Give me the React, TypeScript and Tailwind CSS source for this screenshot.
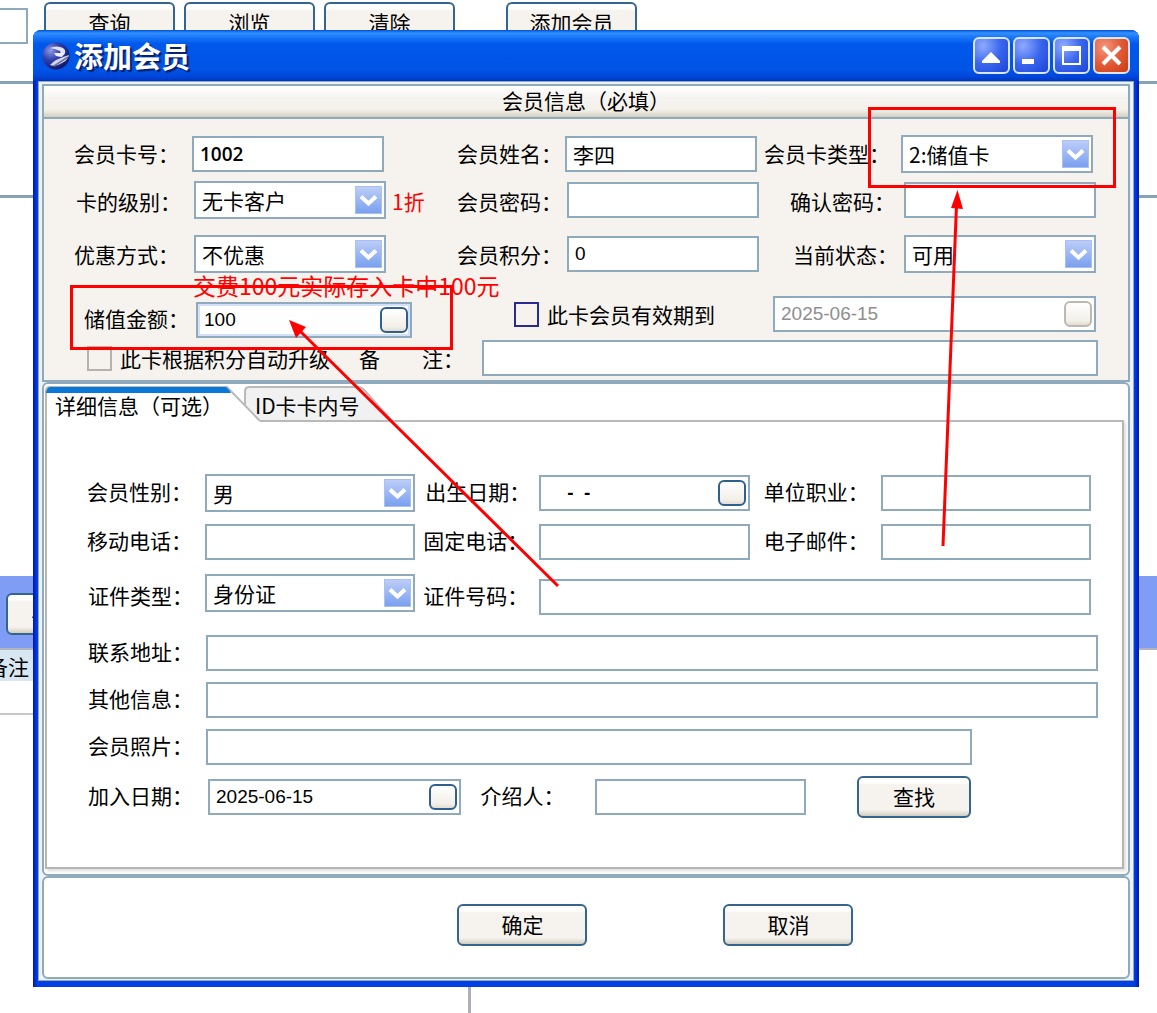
import { useState } from "react";
import type { ReactNode } from "react";

const cjk = "font-['Noto_Sans_CJK_SC',sans-serif]";
const latin = "font-['Liberation_Sans','Noto_Sans_CJK_SC',sans-serif]";

interface IField {
  id: string;
  className?: string;
  textClass?: string;
  value?: string;
  disabled?: boolean;
}

function Label({
  htmlFor,
  className = "",
  children,
}: {
  htmlFor: string;
  className?: string;
  children: ReactNode;
}) {
  return (
    <label htmlFor={htmlFor} className={`whitespace-nowrap ${className}`}>
      {children}
    </label>
  );
}

function TextField({ id, className = "", textClass = latin, value = "" }: IField) {
  return (
    <input
      id={id}
      type="text"
      defaultValue={value}
      className={`h-9 w-full min-w-0 border-2 border-[#8faabc] bg-white px-1.5 text-[19px] outline-none ${textClass} ${className}`}
    />
  );
}

function SelectField({
  id,
  className = "",
  options,
}: {
  id: string;
  className?: string;
  options: string[];
}) {
  return (
    <div className={`relative h-[38px] min-w-0 ${className}`}>
      <select
        id={id}
        className="h-full w-full appearance-none border-2 border-[#8faabc] bg-white pr-8 pl-1.5 text-[21px] leading-8 outline-none"
      >
        {options.map((option) => (
          <option key={option}>{option}</option>
        ))}
      </select>
      <span className="pointer-events-none absolute top-[5px] right-1 flex h-7 w-[27px] items-center justify-center border border-[#a9c0f4] bg-linear-to-b from-[#bccdf8] to-[#7aa0ee]">
        <svg width="19" height="13" viewBox="0 0 19 13" fill="none">
          <path d="M2 2.5 L9.5 9.5 L17 2.5" stroke="#fff" strokeWidth="4" />
        </svg>
      </span>
    </div>
  );
}

function DateField({
  id,
  className = "",
  textClass = "",
  value = "",
  disabled = false,
}: IField) {
  return (
    <div
      className={`flex h-9 min-w-0 items-center border-2 border-[#8faabc] bg-white pr-0.5 ${className}`}
    >
      <input
        id={id}
        type="text"
        defaultValue={value}
        disabled={disabled}
        className={`h-8 w-full min-w-0 px-1.5 text-[19px] whitespace-pre outline-none disabled:text-[#8e8e8e] ${latin} ${textClass}`}
      />
      <button
        type="button"
        aria-label="选择"
        disabled={disabled}
        className="h-[26px] w-7 shrink-0 rounded-md border-2 border-[#2f5f8f] bg-[linear-gradient(to_bottom,#ffffff,#f7f5f1_50%,#f3f0ea_80%,#e3ddd3)] disabled:border-[#bdb8b0]"
      />
    </div>
  );
}

function PushButton({
  className = "",
  children,
}: {
  className?: string;
  children: ReactNode;
}) {
  return (
    <button
      type="button"
      className={`h-[42px] shrink-0 rounded-md border-2 border-[#33658f] bg-[linear-gradient(to_bottom,#ffffff_12%,#f6f3ee_18%,#f6f3ee_84%,#d3ccc0)] pb-0.5 text-[21px] ${className}`}
    >
      {children}
    </button>
  );
}

function Caption({
  label,
  close = false,
  children,
}: {
  label: string;
  close?: boolean;
  children: ReactNode;
}) {
  return (
    <button
      type="button"
      aria-label={label}
      className={`h-[37px] w-[37px] rounded-md border-2 border-[#dbe6fb] ${
        close
          ? "bg-radial-[at_30%_25%] from-[#f3967c] via-[#e25a37] to-[#c93a10]"
          : "bg-radial-[at_25%_20%] from-[#8fabff] via-[#3a66ee] to-[#1a45d8]"
      }`}
    >
      <svg width="33" height="33" viewBox="0 0 33 33" fill="none">
        {children}
      </svg>
    </button>
  );
}

// main window that stays visible around the dialog
function Backdrop() {
  return (
    <div className="absolute inset-0 flex flex-col overflow-hidden">
      <div className="flex h-[81px] shrink-0 items-start pt-0.5">
        <input
          type="text"
          aria-label="关键字"
          className="mt-1.5 mr-4 h-9 w-7 border-2 border-l-0 border-[#8faabc]"
        />
        <PushButton className="mr-[9px] w-[131px]">查询</PushButton>
        <PushButton className="mr-[9px] w-[131px]">浏览</PushButton>
        <PushButton className="mr-[51px] w-[131px]">清除</PushButton>
        <PushButton className="w-[131px]">添加会员</PushButton>
      </div>
      <div className="h-[3px] shrink-0 bg-[#88a3b5]" />
      <div className="h-[111px] shrink-0" />
      <div className="h-[3px] shrink-0 bg-[#88a3b5]" />
      <div className="h-[378px] shrink-0" />
      <div className="flex h-[74px] shrink-0 items-center border-b-2 border-[#b3b3bf] bg-[#809df5] pt-1 pl-1.5">
        <PushButton className="w-[92px]">导出</PushButton>
      </div>
      <div className="flex h-[31px] w-[33px] shrink-0 items-center justify-end bg-[#d8e6f2] pr-1">
        <span className="whitespace-nowrap">备注</span>
      </div>
      <div className="h-[34px] w-[33px] shrink-0 border-b-2 border-[#c8c8c8]" />
      <div className="ml-[468px] w-[3px] grow bg-[#aeaeb6]" />
    </div>
  );
}

function TitleBar() {
  return (
    <header className="flex h-[51px] items-center rounded-t-lg bg-[linear-gradient(to_bottom,#0050d8_0,#3290ff_3px,#1a78fa_7px,#0058ea_14px,#0054e6_40px,#0046d8_47px,#0034c4_51px)] px-[9px]">
      <svg width="28" height="28" viewBox="0 0 28 28">
        <defs>
          <radialGradient id="ball" cx="0.3" cy="0.3" r="0.75">
            <stop offset="0" stopColor="#8f9ce6" />
            <stop offset="0.45" stopColor="#3442b0" />
            <stop offset="1" stopColor="#0f1868" />
          </radialGradient>
        </defs>
        <circle cx="14" cy="14" r="13.5" fill="url(#ball)" />
        <path
          d="M8 6 Q15 3 21 6 Q25 9 22 13 Q18 15 15 14 Q20 12 18 9 Q14 7 8 6Z"
          fill="#dfe3f8"
        />
        <path d="M12 11 L22 11 L20 15 L14 14 Z" fill="#eef0fb" />
        <path d="M8 23 Q13 17 27 13 Q26 18 20 21 Q14 25 8 23Z" fill="#d3d6e6" />
        <path d="M12 24 L26 15" stroke="#6a74ac" strokeWidth="1.5" />
      </svg>
      <h1 className="ml-1 grow text-[29px] leading-none font-bold whitespace-nowrap text-white [text-shadow:2px_2px_1px_#0a1f6b]">
        添加会员
      </h1>
      <div className="flex gap-[3px]">
        <Caption label="收起">
          <path d="M7 24 V22 L16 13 L25 22 V24 Z" fill="#fff" />
        </Caption>
        <Caption label="最小化">
          <rect x="7" y="20" width="12" height="5" fill="#fff" />
        </Caption>
        <Caption label="最大化">
          <rect x="8" y="9" width="17" height="16" stroke="#fff" strokeWidth="2" />
          <rect x="7" y="7" width="19" height="5" fill="#fff" />
        </Caption>
        <Caption label="关闭" close>
          <path d="M8 8 L25 25 M25 8 L8 25" stroke="#fff" strokeWidth="4" />
        </Caption>
      </div>
    </header>
  );
}

const requiredRow =
  "grid grid-cols-[150px_1fr_181px_1fr_145px_1fr_32px] items-center";

function RequiredPanel() {
  return (
    <section className="border-2 border-[#8faabc] bg-[#f6f3ee]">
      <h2 className="h-[33px] border-b-2 border-[#8faabc] bg-[linear-gradient(to_bottom,#ffffff,#f6f4f1_12px,#f4f1ea_24px,#d3cebf_31px)] text-center leading-7">
        会员信息（必填）
      </h2>
      <div className="pt-4 pb-1">
        <div className="grid grid-cols-[148px_1fr_181px_1fr_144px_1fr_35px] items-center [&_label]:pb-0.5">
          <Label htmlFor="cardNo" className="pl-[30px]">会员卡号：</Label>
          <TextField
            id="cardNo"
            value="1002"
            textClass="font-['Open_Sans',sans-serif] font-semibold"
          />
          <Label htmlFor="name" className="pl-[73px]">会员姓名：</Label>
          <TextField id="name" value="李四" textClass={`${cjk} text-[21px]`} />
          <Label htmlFor="cardType" className="pl-[7px]">会员卡类型：</Label>
          <SelectField id="cardType" options={["2:储值卡"]} />
        </div>
        <div className={`mt-2 [&_label]:pt-0.5 ${requiredRow}`}>
          <Label htmlFor="level" className="pl-8">卡的级别：</Label>
          <SelectField id="level" options={["无卡客户"]} />
          <div className="flex">
            <span className="w-[71px] pt-0.5 pl-1.5 text-[#ff0000]">1折</span>
            <Label htmlFor="password">会员密码：</Label>
          </div>
          <TextField id="password" />
          <Label htmlFor="password2" className="pl-[31px]">确认密码：</Label>
          <TextField id="password2" />
        </div>
        <div className={`mt-4 ${requiredRow}`}>
          <Label htmlFor="discount" className="pl-[30px]">优惠方式：</Label>
          <SelectField id="discount" options={["不优惠"]} />
          <Label htmlFor="points" className="pl-[71px]">会员积分：</Label>
          <TextField id="points" value="0" />
          <Label htmlFor="status" className="pl-[34px]">当前状态：</Label>
          <SelectField id="status" options={["可用"]} />
        </div>
        <p className="h-[23px] pl-[149px] text-[23px] leading-6 text-[#ff0000]">
          交费100元实际存入卡中100元
        </p>
        <div className="flex h-[42px]">
          <Label htmlFor="amount" className="w-[152px] self-end pb-0.5 pl-10 leading-9">
            储值金额：
          </Label>
          <DateField
            id="amount"
            value="100"
            className="w-[216px] self-end shadow-[inset_0_0_0_2px_#d3e0f8]"
            textClass="bg-transparent"
          />
          <label className="ml-[102px] flex h-9 items-center gap-2 whitespace-nowrap">
            <input
              type="checkbox"
              className="h-[25px] w-[25px] appearance-none border-2 border-[#2a2a94]"
            />
            此卡会员有效期到
          </label>
          <DateField
            id="expire"
            value="2025-06-15"
            disabled
            className="mr-8 ml-[58px] flex-1"
          />
        </div>
        <div className="mt-0.5 flex h-9 items-center">
          <label className="ml-[43px] flex w-[272px] items-center gap-2 whitespace-nowrap">
            <input
              type="checkbox"
              className="h-[25px] w-[25px] appearance-none border-2 border-[#b5b2ac]"
            />
            此卡根据积分自动升级
          </label>
          <Label htmlFor="remark" className="flex w-[123px] gap-[42px]">
            <span>备</span>
            <span>注：</span>
          </Label>
          <TextField id="remark" className="mr-[30px] flex-1" />
        </div>
      </div>
    </section>
  );
}

const detailRow =
  "grid grid-cols-[158px_1fr_124px_1fr_131px_1fr_31px] items-center";

function DetailPanel() {
  const [tab, setTab] = useState(0);
  return (
    <section className="rounded-md border-2 border-[#8faabc] bg-white pt-0.5 pr-1 pb-[5px] pl-px">
      <div role="tablist" className="relative flex h-[34px]">
        <svg
          className="absolute top-0 left-0 h-9 w-[350px]"
          viewBox="0 0 350 36"
          fill="none"
          aria-hidden="true"
        >
          <path
            d="M200 35 V5 Q200 1 205 1 H313 Q317 1 321 6 L347 35"
            fill="#f1f1f1"
            stroke="#b9b9b9"
            strokeWidth="2"
          />
          <path d="M0 36 V5 Q1 1 5 1 H182 L215 35 V36 Z" fill="#fff" />
          <path
            d="M1 36 V5 Q1 1 5 1 H182 L215 35"
            stroke="#b9b9b9"
            strokeWidth="2"
          />
          <path d="M1 7 Q2 1 5 1 H181 Q184 3 186 7 Z" fill="#0a78d6" />
        </svg>
        <button
          role="tab"
          type="button"
          aria-selected={tab === 0}
          onClick={() => setTab(0)}
          className="relative w-[210px] pl-2.5 text-left leading-[38px] whitespace-nowrap"
        >
          详细信息（可选）
        </button>
        <button
          role="tab"
          type="button"
          aria-selected={tab === 1}
          onClick={() => setTab(1)}
          className="relative w-[130px] text-left leading-[38px] whitespace-nowrap"
        >
          ID卡卡内号
        </button>
        <div className="absolute right-0 -bottom-0.5 left-[215px] h-0.5 bg-[#b9b9b9]" />
      </div>
      <div className="border-2 border-t-0 border-[#b5b5b5] pt-[54px] pb-[49px] shadow-[2px_2px_3px_#dddddd] [&_label]:pb-1">
        <div className={detailRow}>
          <Label htmlFor="gender" className="pl-10">会员性别：</Label>
          <SelectField id="gender" options={["男", "女"]} />
          <Label htmlFor="birthday" className="pl-2.5">出生日期：</Label>
          <DateField id="birthday" value="   -  -" textClass="pl-2.5 font-bold" />
          <Label htmlFor="job" className="pl-3.5">单位职业：</Label>
          <TextField id="job" />
        </div>
        <div className={`mt-3 ${detailRow}`}>
          <Label htmlFor="mobile" className="pl-10">移动电话：</Label>
          <TextField id="mobile" />
          <Label htmlFor="phone" className="pl-2">固定电话：</Label>
          <TextField id="phone" />
          <Label htmlFor="email" className="pl-3.5">电子邮件：</Label>
          <TextField id="email" />
        </div>
        <div className={`mt-3.5 h-[41px] ${detailRow}`}>
          <Label htmlFor="idType" className="self-end pl-[41px] leading-8">
            证件类型：
          </Label>
          <SelectField id="idType" className="self-start" options={["身份证"]} />
          <Label htmlFor="idNo" className="self-end pl-2 leading-8">
            证件号码：
          </Label>
          <TextField id="idNo" className="col-span-3 self-end" />
        </div>
        <div className="mt-5 grid grid-cols-[159px_1fr] items-center gap-y-[11px] pr-6">
          <Label htmlFor="address" className="pl-[41px]">联系地址：</Label>
          <TextField id="address" />
          <Label htmlFor="other" className="pl-[41px]">其他信息：</Label>
          <TextField id="other" />
          <Label htmlFor="photo" className="pl-[41px]">会员照片：</Label>
          <div className="pr-[126px]">
            <TextField id="photo" className="block" />
          </div>
        </div>
        <div className="mt-[11px] flex items-center pr-[151px]">
          <Label htmlFor="joined" className="w-[161px] pl-[41px]">加入日期：</Label>
          <DateField id="joined" value="2025-06-15" className="flex-[7]" />
          <Label htmlFor="referrer" className="w-[134px] pl-5">介绍人：</Label>
          <div className="min-w-0 flex-[6]">
            <TextField id="referrer" className="block" />
          </div>
          <PushButton className="ml-[51px] w-[114px]">查找</PushButton>
        </div>
      </div>
    </section>
  );
}

// red frames and arrows drawn over the form
function Marks() {
  return (
    <svg
      className="pointer-events-none absolute inset-0 h-full w-full"
      fill="none"
      stroke="#ff0000"
      aria-hidden="true"
    >
      <rect x="71.5" y="286.5" width="380" height="62" strokeWidth="3" />
      <rect x="869.5" y="108.5" width="245" height="78" strokeWidth="3" />
      <path d="M558 586 L300 331 M943 546 L956.5 205" strokeWidth="3" />
      <path d="M289 320 L306 327 L296 338 Z" fill="#ff0000" stroke="none" />
      <path d="M957.5 190 L963 209 L951 208 Z" fill="#ff0000" stroke="none" />
    </svg>
  );
}

function App() {
  return (
    <main
      lang="zh-CN"
      className={`relative flow-root min-h-screen bg-white text-[21px] leading-7 text-black ${cjk}`}
    >
      <Backdrop />
      <div className="relative mt-[30px] mr-[18px] mb-[26px] ml-[33px] rounded-t-lg bg-[linear-gradient(to_right,#0018b0,#0034dc_3px,#0040e4_5px,#0040e4_calc(100%-5px),#0030d8_calc(100%-3px),#0018a8)]">
        <TitleBar />
        <div className="px-[5px] pb-1.5">
          <form className="border border-[#8faabc] bg-[#edf2f5] px-[3px] pt-0.5 pb-px">
            <RequiredPanel />
            <DetailPanel />
            <footer className="flex gap-[136px] rounded-md border-2 border-[#8faabc] bg-white pt-[26px] pb-[31px] pl-[38%]">
              <PushButton className="w-[130px]">确定</PushButton>
              <PushButton className="w-[130px]">取消</PushButton>
            </footer>
          </form>
        </div>
      </div>
      <Marks />
    </main>
  );
}

export default App;
